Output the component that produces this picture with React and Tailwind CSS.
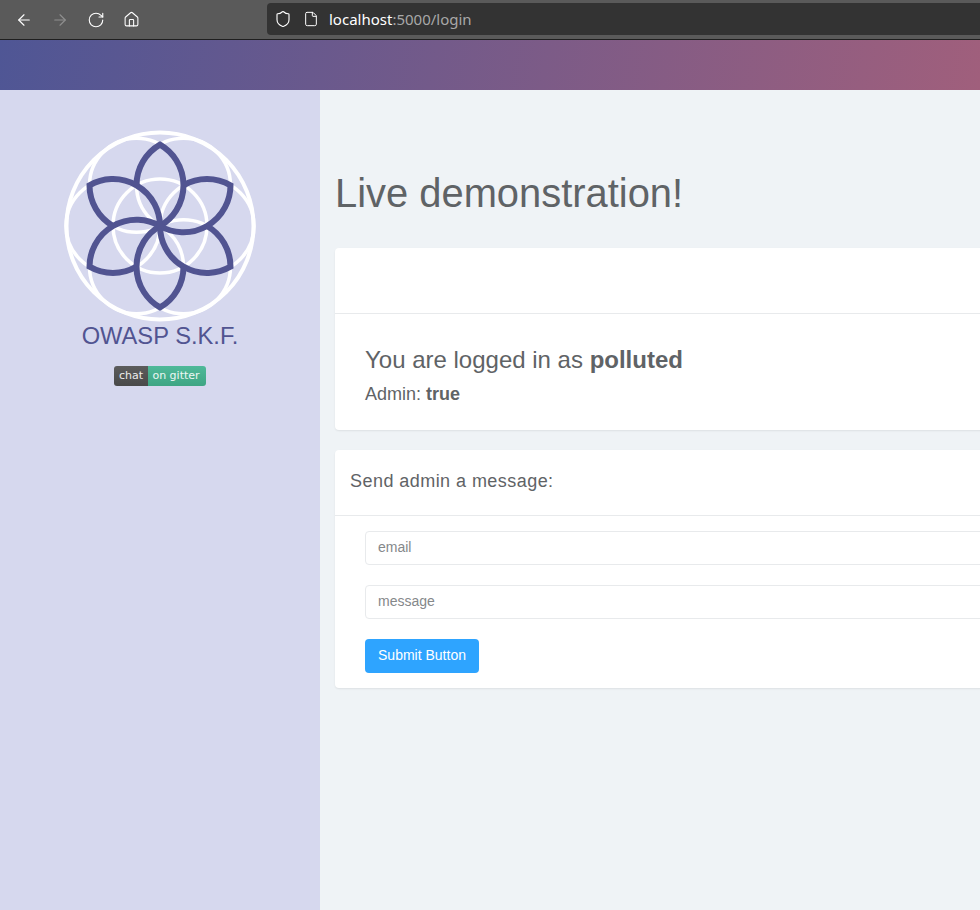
import { ArrowLeft, ArrowRight, RotateCw, Home, Shield, File } from 'lucide-react'

const petalAngles = [0, 60, 120, 180, 240, 300]
const circleAngles = [0, 60, 120, 180, 240, 300]

const Logo = () => (
  <svg width="196" height="196" viewBox="-98 -98 196 196" fill="none">
    <g stroke="#ffffff" strokeWidth="3.5">
      <circle r="93.5" strokeWidth="4" />
      <circle r="47" />
      {circleAngles.map(a => (
        <circle
          key={a}
          r="47"
          cx={47 * Math.cos((a * Math.PI) / 180)}
          cy={47 * Math.sin((a * Math.PI) / 180)}
        />
      ))}
    </g>
    <g stroke="#515491" strokeWidth="6" strokeLinejoin="miter">
      {petalAngles.map(a => (
        <path
          key={a}
          transform={`rotate(${a})`}
          d="M0 0 A47 47 0 0 0 0 -81.4 A47 47 0 0 0 -23.5 -40.7"
        />
      ))}
    </g>
  </svg>
)

const App = () => {
  return (
    <div className="w-[980px] h-[910px] overflow-hidden bg-[#eff3f6] font-['Liberation_Sans',sans-serif] text-[#5f6366]">
      <div className="h-[40px] bg-[#5a5a5a] border-b border-[#1f1f1f] flex items-center">
        <div className="flex items-center text-white pl-[15px] gap-[18px]">
          <ArrowLeft size={18} strokeWidth={1.5} />
          <ArrowRight size={18} strokeWidth={1.5} className="text-[#8f8f8f]" />
          <RotateCw size={18} strokeWidth={1.5} />
          <Home size={17} strokeWidth={1.5} />
        </div>
        <div className="ml-[127px] mb-[2px] h-[32px] flex-1 bg-[#333333] rounded-l-[4px] flex items-center pl-[7px] text-[15px] font-['Noto_Sans',sans-serif] text-white">
          <Shield size={18} strokeWidth={1.5} />
          <File size={16} strokeWidth={1.5} className="ml-[11px]" />
          <span className="ml-[10px] mt-[2px]">localhost<span className="text-[#a8a8a8]">:5000/login</span></span>
        </div>
      </div>
      <div className="h-[50px] bg-[linear-gradient(100deg,#4f5695_0%,#a05f7c_100%)]" />
      <div className="flex h-[820px]">
        <aside className="w-[320px] bg-[#d6d8ee] flex flex-col items-center pt-[38px]">
          <Logo />
          <div className="mt-[-3px] text-[23.7px] leading-[30px] text-[#515491]">OWASP S.K.F.</div>
          <div className="mt-[15px] h-[20px] w-[92px] rounded-[3px] overflow-hidden flex text-[11px] leading-[20px] text-white/90 font-['DejaVu_Sans',sans-serif]">
            <span className="w-[34px] text-center bg-[linear-gradient(#5c5c5c,#494949)]">chat</span>
            <span className="flex-1 pr-[2px] text-center bg-[linear-gradient(#4fb999,#3ea583)]">on gitter</span>
          </div>
        </aside>
        <main className="w-[660px] pl-[15px] overflow-hidden">
          <h1 className="mt-[79px] text-[39.9px] leading-[48px] font-normal">Live demonstration!</h1>
          <section className="mt-[31px] w-[700px] bg-white rounded-l-[4px] shadow-[0_1px_2px_rgba(0,0,0,0.08)]">
            <div className="h-[66px] border-b border-[#e8eaec]" />
            <div className="pl-[30px] pt-[30px] pb-[23px]">
              <div className="text-[24px] leading-[32px]">You are logged in as <b>polluted</b></div>
              <div className="mt-[5px] text-[18px] leading-[26px]">Admin: <b>true</b></div>
            </div>
          </section>
          <section className="mt-[20px] w-[700px] bg-white rounded-l-[4px] shadow-[0_1px_2px_rgba(0,0,0,0.08)]">
            <div className="h-[66px] border-b border-[#e8eaec] pl-[15px] text-[18px] leading-[62px] tracking-[0.45px]">Send admin a message:</div>
            <form className="pl-[30px] pt-[15px] pb-[15px]">
              <input className="block w-full h-[34px] border border-[#e8eaec] rounded-[4px] pl-[12px] pb-[2px] text-[14px] placeholder:text-[#85888a]" placeholder="email" />
              <input className="block w-full h-[34px] mt-[20px] border border-[#e8eaec] rounded-[4px] pl-[12px] pb-[2px] text-[14px] placeholder:text-[#85888a]" placeholder="message" />
              <button type="button" className="block mt-[20px] w-[114px] h-[34px] pb-[2px] bg-[#2ea4ff] rounded-[4px] text-white text-[14px]">Submit Button</button>
            </form>
          </section>
        </main>
      </div>
    </div>
  )
}

export default App
